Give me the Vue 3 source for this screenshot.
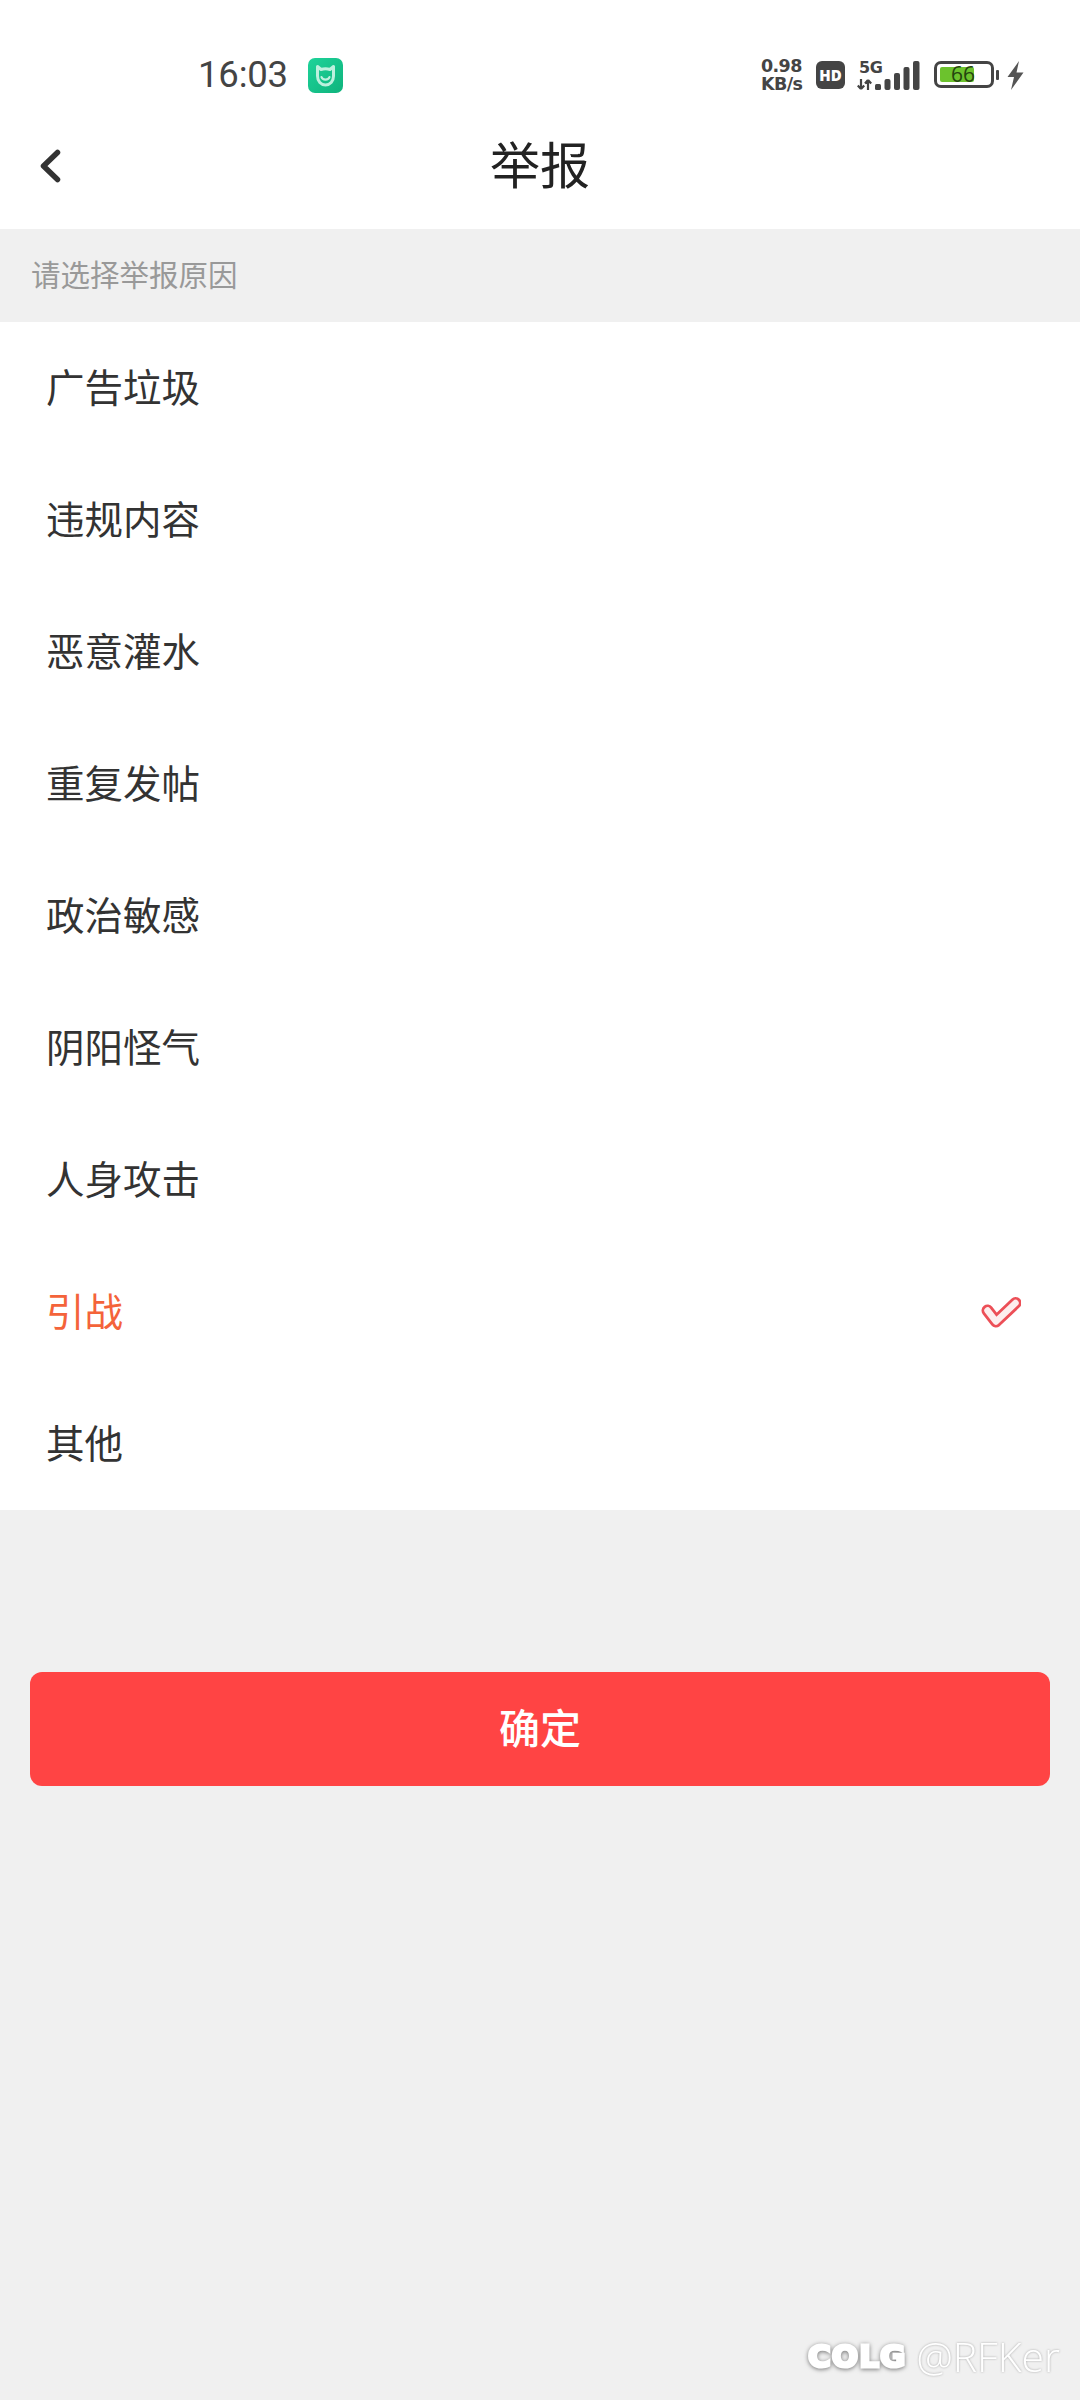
<script setup>
const reasons = ['广告垃圾', '违规内容', '恶意灌水', '重复发帖', '政治敏感', '阴阳怪气', '人身攻击', '引战', '其他']
const selected = '引战'
</script>

<template>
  <div class="page">
    <header class="top">
      <div class="status">
        <div class="status-left">
          <span class="time">16:03</span>
          <svg class="mi" width="35" height="35" viewBox="0 0 35 35">
            <defs>
              <linearGradient id="mig" x1="0" y1="0" x2="1" y2="1">
                <stop offset="0" stop-color="#1ed39a" />
                <stop offset="1" stop-color="#0fb37c" />
              </linearGradient>
            </defs>
            <rect width="35" height="35" rx="7" fill="url(#mig)" />
            <path d="M9.5 8.5 L13 11.5 Q17.5 10 22 11.5 L25.5 8.5 V18 C25.5 23.5 22 27 17.5 27 C13 27 9.5 23.5 9.5 18 Z" fill="none" stroke="#bdf0de" stroke-width="3" stroke-linejoin="round" />
            <path d="M13.5 19 C14.5 22.5 20.5 22.5 21.5 19" fill="none" stroke="#bdf0de" stroke-width="2.2" stroke-linecap="round" />
          </svg>
        </div>
        <div class="status-right">
          <div class="speed"><span>0.98</span><span>KB/s</span></div>
          <span class="hd">HD</span>
          <div class="net">
            <div class="net-text">
              <span class="g5">5G</span>
              <svg class="arrows" width="15" height="11" viewBox="0 0 15 11">
                <path d="M4 0V10M4 10L0.8 6.5M4 10L7.2 6.5M11 11V1M11 1L8 4.5M11 1L14.2 4.5" fill="none" stroke="#444" stroke-width="2.2" />
              </svg>
            </div>
            <svg class="bars" width="45" height="29" viewBox="0 0 45 29">
              <g fill="#444">
                <rect x="0" y="23" width="6" height="6" rx="1.5" />
                <rect x="9.5" y="18" width="6" height="11" rx="2" />
                <rect x="19" y="12" width="6" height="17" rx="2" />
                <rect x="28.5" y="6" width="6" height="23" rx="2" />
                <rect x="38" y="0" width="6.5" height="29" rx="2" />
              </g>
            </svg>
          </div>
          <div class="battery">
            <div class="shell">
              <div class="fill"></div>
              <span class="level">66</span>
            </div>
            <span class="nub"></span>
          </div>
          <svg class="bolt" width="17" height="29" viewBox="0 0 17 29">
            <path d="M12 0 L0.5 16 H7 L4 29 L16.5 11.5 H9.5 Z" fill="#555" />
          </svg>
        </div>
      </div>
      <nav class="nav">
        <svg class="back" width="22" height="34" viewBox="0 0 22 34">
          <path d="M18.5 3.5 L4.5 17 L18.5 30.5" fill="none" stroke="#333" stroke-width="5.5" stroke-linecap="round" stroke-linejoin="round" />
        </svg>
        <h1 class="title">举报</h1>
      </nav>
    </header>

    <div class="hint">请选择举报原因</div>

    <ul class="list">
      <li v-for="r in reasons" :key="r" class="row" :class="{ active: r === selected }">
        <span class="label">{{ r }}</span>
        <svg v-if="r === selected" width="40" height="33" viewBox="0 0 40 33">
          <path d="M6.5 14.5 L15 25.5 L34.5 7" fill="none" stroke="#ec4f57" stroke-width="12" stroke-linecap="round" stroke-linejoin="round" />
          <path d="M6.5 14.5 L15 25.5 L34.5 7" fill="none" stroke="#fdeeee" stroke-width="6.5" stroke-linecap="round" stroke-linejoin="round" />
        </svg>
      </li>
    </ul>

    <div class="action">
      <button class="confirm" type="button">确定</button>
    </div>

    <div class="watermark">
      <span class="colg">COLG</span>
      <span class="handle">@RFKer</span>
    </div>
  </div>
</template>

<style scoped>
.page {
  position: relative;
  width: 1080px;
  height: 2400px;
  background: #f0f0f0;
  font-family: "Noto Sans CJK SC", "Noto Sans", sans-serif;
  color: #333;
  overflow: hidden;
}
.top {
  height: 229px;
  background: #fff;
  display: flex;
  flex-direction: column;
}
.status {
  height: 120px;
  display: flex;
  justify-content: space-between;
  padding: 55px 56px 0 198px;
  box-sizing: border-box;
}
.status-left {
  display: flex;
  align-items: flex-start;
  gap: 20px;
}
.time {
  font-family: Roboto, sans-serif;
  font-size: 36.5px;
  line-height: 40px;
  letter-spacing: -0.2px;
  color: #444;
}
.mi {
  margin-top: 3px;
}
.status-right {
  display: flex;
  align-items: flex-start;
  height: 40px;
}
.speed {
  display: flex;
  flex-direction: column;
  width: 46px;
  margin-top: 2px;
  font-family: "DejaVu Sans", sans-serif;
  font-weight: 700;
  font-size: 17.5px;
  line-height: 18px;
  letter-spacing: -0.6px;
  color: #444;
  white-space: nowrap;
}
.hd {
  width: 29px;
  height: 28px;
  margin: 6px 0 0 9px;
  border-radius: 6px;
  background: #444;
  color: #fff;
  font-family: "Open Sans", sans-serif;
  font-size: 15px;
  font-weight: 800;
  line-height: 28px;
  text-align: center;
}
.net {
  display: flex;
  align-items: flex-start;
  margin: 6px 0 0 12px;
}
.net-text {
  position: relative;
  width: 18px;
  height: 29px;
}
.g5 {
  position: absolute;
  left: 2px;
  top: -3px;
  font-family: "DejaVu Sans", sans-serif;
  font-size: 16px;
  font-weight: 700;
  line-height: 19px;
  letter-spacing: -0.5px;
  color: #444;
}
.arrows {
  position: absolute;
  left: 0;
  top: 18px;
}
.battery {
  display: flex;
  align-items: center;
  margin: 6px 0 0 14px;
}
.shell {
  position: relative;
  width: 60px;
  height: 27px;
  box-sizing: border-box;
  border: 3px solid #444;
  border-radius: 7px;
  padding: 3px;
}
.fill {
  width: 34px;
  height: 15px;
  background: #6cc22d;
  border-radius: 2px;
}
.level {
  position: absolute;
  left: 14px;
  top: -1px;
  font-family: "Open Sans", sans-serif;
  font-size: 21px;
  line-height: 23px;
  color: #24440f;
}
.nub {
  width: 3px;
  height: 10px;
  margin-left: 2px;
  border-radius: 1px;
  background: #444;
}
.bolt {
  margin: 6px 0 0 8px;
}
.nav {
  position: relative;
  flex: 1;
  display: flex;
  align-items: center;
  justify-content: center;
}
.back {
  position: absolute;
  left: 39px;
  top: 29px;
}
.title {
  margin: -26px 0 0;
  font-size: 50px;
  font-weight: 400;
  line-height: 70px;
  color: #222;
}
.hint {
  height: 93px;
  padding-left: 31px;
  font-size: 29.5px;
  line-height: 88px;
  color: #999;
}
.list {
  list-style: none;
  margin: 0;
  padding: 0;
  background: #fff;
}
.row {
  height: 132px;
  display: flex;
  align-items: center;
  justify-content: space-between;
  padding: 0 59px 0 46px;
  font-size: 38.5px;
  color: #333;
}
.label {
  margin-bottom: 6px;
}
.row.active {
  color: #f4633a;
}
.action {
  padding: 162px 30px 0;
}
.confirm {
  display: block;
  width: 100%;
  height: 114px;
  border: 0;
  border-radius: 12px;
  background: #ff4444;
  color: #fff;
  font-family: inherit;
  font-size: 41px;
  font-weight: 500;
  padding: 0 0 7px;
}
.watermark {
  position: absolute;
  right: 20px;
  bottom: 16px;
  display: flex;
  align-items: center;
  gap: 10px;
}
.colg {
  font-family: "DejaVu Sans", sans-serif;
  font-size: 31px;
  font-weight: 700;
  color: #fff;
  letter-spacing: 1px;
  -webkit-text-stroke: 3px #fff;
  paint-order: stroke fill;
  filter: drop-shadow(0 1px 2px #777);
}
.handle {
  font-family: "Open Sans", sans-serif;
  font-size: 41px;
  font-weight: 300;
  color: #fff;
  filter: drop-shadow(0 0 1px #aaa);
}
</style>
